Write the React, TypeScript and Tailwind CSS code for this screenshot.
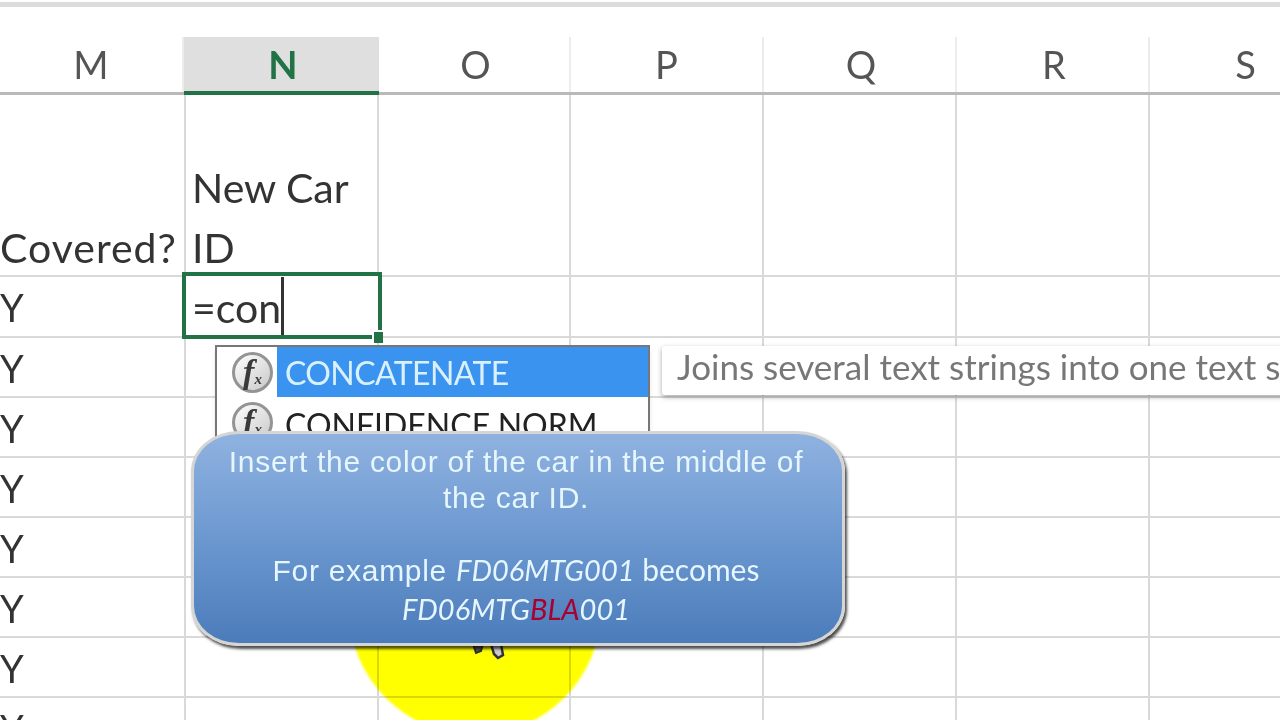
import React from 'react';

const COLUMNS = [
  { label: 'M', width: 'w-[184px]', nudge: '' },
  { label: 'N', width: 'w-[195px]', nudge: 'pl-[3px]' },
  { label: 'O', width: 'w-[192px]', nudge: 'pl-[3px]' },
  { label: 'P', width: 'w-[193px]', nudge: '' },
  { label: 'Q', width: 'w-[193px]', nudge: 'pl-[3px]' },
  { label: 'R', width: 'w-[193px]', nudge: 'pl-[3px]' },
  { label: 'S', width: 'w-[193px]', nudge: '' },
];

const ROW_HEIGHTS = ['h-[61px]', 'h-[60px]', 'h-[60px]', 'h-[60px]', 'h-[60px]', 'h-[60px]', 'h-[60px]', 'h-[60px]'];

const FxIcon = () => (
  <div className="w-[41px] h-[41px] shrink-0 rounded-full border-[3px] border-[#949494] bg-gradient-to-br from-white to-[#c9c9c9] flex items-center justify-center font-['Liberation_Serif',serif] italic font-bold text-[#3a3a3a] leading-none">
    <span className="text-[34px]">f</span>
    <span className="text-[15px] mt-[14px]">x</span>
  </div>
);

const App: React.FC = () => {
  return (
    <div className="relative w-[1280px] h-[720px] overflow-hidden bg-white font-['Lato',sans-serif] blur-[0.6px]">
      <div className="h-[37px] pt-[2px]">
        <div className="h-[5px] bg-[#dcdcdc]"></div>
      </div>

      {/* column headers */}
      <div className="flex w-[1400px] h-[58px] border-b-[3px] border-[#b9b9b9]">
        {COLUMNS.map((col) =>
          col.label === 'N' ? (
            <div key={col.label} className={`${col.width} ${col.nudge} -mb-[3px] bg-[#dfdfdf] border-b-[4px] border-[#217346] flex items-center justify-center text-[38px] font-bold text-[#217346]`}>
              {col.label}
            </div>
          ) : (
            <div key={col.label} className={`${col.width} ${col.nudge} border-r-2 border-[#ececec] flex items-center justify-center text-[38px] text-[#555]`}>
              {col.label}
            </div>
          )
        )}
      </div>

      {/* title row */}
      <div className="flex w-[1400px] h-[182px] border-b-2 border-[#d9d9d9]">
        <div className="w-[186px] border-r-2 border-[#d9d9d9] pt-[123px] text-[41px] leading-[60px] tracking-[1px] text-[#333] whitespace-nowrap">Covered?</div>
        <div className="w-[193px] border-r-2 border-[#d9d9d9] pt-[63px] text-[41px] leading-[60px] text-[#333] pl-[6px]">
          <div>New Car<br />ID</div>
        </div>
        {COLUMNS.slice(2).map((col) => (
          <div key={col.label} className={`${col.width} border-r-2 border-[#d9d9d9]`}></div>
        ))}
      </div>

      {/* data rows */}
      {ROW_HEIGHTS.map((height, i) => (
        <div key={i} className={`flex w-[1400px] ${height} border-b-2 border-[#d9d9d9]`}>
          <div className="w-[186px] border-r-2 border-[#d9d9d9] flex items-center pt-[2px] text-[38px] text-[#333]">Y</div>
          <div className="w-[193px] border-r-2 border-[#d9d9d9]"></div>
          {COLUMNS.slice(2).map((col) => (
            <div key={col.label} className={`${col.width} border-r-2 border-[#d9d9d9]`}></div>
          ))}
        </div>
      ))}

      {/* active cell */}
      <div className="absolute left-[182px] top-[272px] w-[200px] h-[67px] border-[4px] border-[#217346] bg-white flex items-center pl-[6px] text-[41px] text-[#333]">
        <span className="pt-[4px]">=con</span>
        <span className="w-[3px] h-[58px] bg-[#333]"></span>
        <div className="absolute right-[-5px] bottom-[-8px] w-[11px] h-[13px] bg-[#217346] border-l-2 border-t-2 border-white"></div>
      </div>

      {/* autocomplete list */}
      <div className="absolute left-[215px] top-[345px] w-[435px] h-[100px] border-2 border-[#777] border-b-0 bg-white overflow-hidden shadow-md">
        <div className="flex items-center h-[50px]">
          <div className="w-[60px] pl-[15px]"><FxIcon /></div>
          <div className="flex-1 h-full bg-[#3b93f0] text-[#d9f0ff] text-[32px] tracking-[-0.6px] pl-[8px] pt-[2px] flex items-center">CONCATENATE</div>
        </div>
        <div className="flex items-center h-[50px]">
          <div className="w-[60px] pl-[15px]"><FxIcon /></div>
          <div className="flex-1 text-[#222] text-[32px] pl-[8px] pt-[6px]">CONFIDENCE.NORM</div>
        </div>
      </div>

      {/* function tooltip */}
      <div className="absolute left-[662px] top-[346px] w-[640px] h-[49px] bg-white rounded-[3px] shadow-[0_2px_5px_rgba(0,0,0,0.35)] pl-[15px] pb-[9px] flex items-center text-[35px] text-[#777] whitespace-nowrap overflow-hidden">
        Joins several text strings into one text string
      </div>

      {/* mouse highlight */}
      <div className="absolute left-[349px] top-[483px] w-[252px] h-[252px] rounded-full bg-[#ffff00] mix-blend-multiply blur-[1px]"></div>
      <svg className="absolute left-[468px] top-[640px]" width="40" height="24" viewBox="0 0 40 24">
        <path d="M5 4 L15 4 L13 11 L8 13 Z" fill="#555" stroke="#333" strokeWidth="2" />
        <path d="M23 4 L33 4 L35 15 L30 18 L26 14 Z" fill="#ccc" stroke="#333" strokeWidth="2.5" />
      </svg>

      {/* callout */}
      <div className="absolute left-[191px] top-[431px] w-[654px] h-[215px] rounded-[48px_48px_48px_48px/40px_40px_40px_40px] border-[3px] border-[#d5d5d5] bg-gradient-to-b from-[#8fb2e0] via-[#6c98d0] to-[#4b7cba] shadow-[2px_3px_3px_rgba(0,0,0,0.7)] flex flex-col items-center pt-[10px] pr-[4px] text-[#e6f6ff] text-[30px] leading-[36px] font-['Liberation_Sans',sans-serif] text-center">
        <div className="tracking-[0.7px]">Insert the color of the car in the middle of</div>
        <div className="tracking-[0.7px]">the car ID.</div>
        <div className="mt-[35px] whitespace-nowrap">
          <span className="tracking-[0.7px]">For example </span>
          <i className="font-['Lato',sans-serif] text-[29px]">FD06MTG001</i>
          <span className="font-['Lato',sans-serif]"> becomes</span>
        </div>
        <div className="mt-[2px] font-['Lato',sans-serif] italic text-[29px]">FD06MTG<span className="text-[#a8002f]">BLA</span>001</div>
      </div>
    </div>
  );
};

export default App;
